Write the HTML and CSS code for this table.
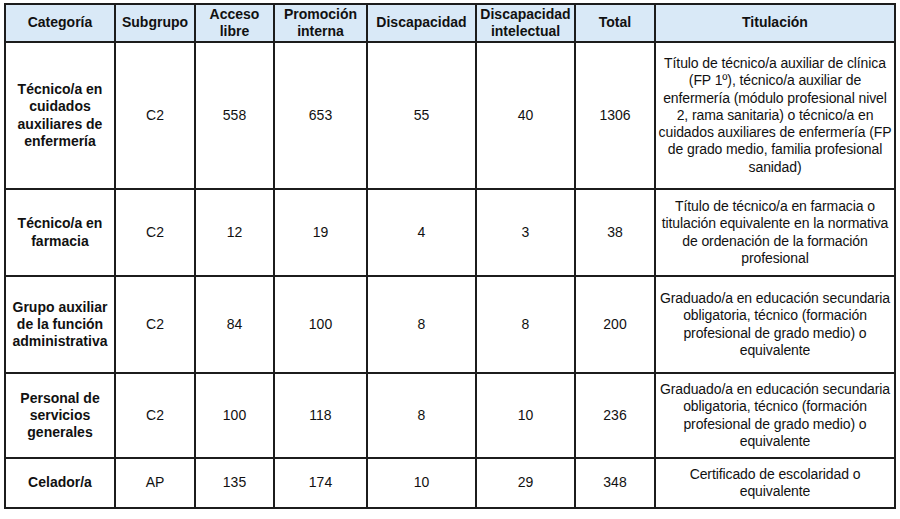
FILE: index.html
```html
<!DOCTYPE html>
<html lang="es">
<head>
<meta charset="utf-8">
<title>Plazas</title>
<link rel="stylesheet" href="styles.css">
</head>
<body>
<table class="plazas">
  <thead>
    <tr class="r-head">
      <th class="c1">Categoría</th>
      <th class="c2">Subgrupo</th>
      <th class="c3">Acceso<br>libre</th>
      <th class="c4">Promoción<br>interna</th>
      <th class="c5">Discapacidad</th>
      <th class="c6">Discapacidad<br>intelectual</th>
      <th class="c7">Total</th>
      <th class="c8">Titulación</th>
    </tr>
  </thead>
  <tbody>
    <tr class="r1">
      <td class="cat">Técnico/a en<br>cuidados<br>auxiliares de<br>enfermería</td>
      <td>C2</td>
      <td>558</td>
      <td>653</td>
      <td>55</td>
      <td>40</td>
      <td>1306</td>
      <td class="tit">Título de técnico/a auxiliar de clínica<br>(FP 1º), técnico/a auxiliar de<br>enfermería (módulo profesional nivel<br>2, rama sanitaria) o técnico/a en<br>cuidados auxiliares de enfermería (FP<br>de grado medio, familia profesional<br>sanidad)</td>
    </tr>
    <tr class="r2">
      <td class="cat">Técnico/a en<br>farmacia</td>
      <td>C2</td>
      <td>12</td>
      <td>19</td>
      <td>4</td>
      <td>3</td>
      <td>38</td>
      <td class="tit">Título de técnico/a en farmacia o<br>titulación equivalente en la normativa<br>de ordenación de la formación<br>profesional</td>
    </tr>
    <tr class="r3">
      <td class="cat">Grupo auxiliar<br>de la función<br>administrativa</td>
      <td>C2</td>
      <td>84</td>
      <td>100</td>
      <td>8</td>
      <td>8</td>
      <td>200</td>
      <td class="tit">Graduado/a en educación secundaria<br>obligatoria, técnico (formación<br>profesional de grado medio) o<br>equivalente</td>
    </tr>
    <tr class="r4">
      <td class="cat">Personal de<br>servicios<br>generales</td>
      <td>C2</td>
      <td>100</td>
      <td>118</td>
      <td>8</td>
      <td>10</td>
      <td>236</td>
      <td class="tit">Graduado/a en educación secundaria<br>obligatoria, técnico (formación<br>profesional de grado medio) o<br>equivalente</td>
    </tr>
    <tr class="r5">
      <td class="cat">Celador/a</td>
      <td>AP</td>
      <td>135</td>
      <td>174</td>
      <td>10</td>
      <td>29</td>
      <td>348</td>
      <td class="tit">Certificado de escolaridad o<br>equivalente</td>
    </tr>
  </tbody>
</table>
</body>
</html>
```
FILE: styles.css
```css
html, body {
  margin: 0;
  padding: 0;
  background: #ffffff;
}

body {
  padding: 3px 0 0 4px;
  font-family: "Liberation Sans", Arial, sans-serif;
  color: #111111;
}

.plazas {
  border-collapse: separate;
  border-spacing: 0;
  table-layout: fixed;
  width: 892px;
  border-left: 2px solid #1c1c1c;
  border-top: 2px solid #1c1c1c;
  font-size: 14px;
  line-height: 17.3px;
}

.plazas th,
.plazas td {
  box-sizing: border-box;
  border-right: 2px solid #1c1c1c;
  border-bottom: 2px solid #1c1c1c;
  padding: 0 1px;
  text-align: center;
  vertical-align: middle;
  white-space: nowrap;
}

.plazas th {
  background: #d9e9f7;
  font-weight: bold;
}

.c1 { width: 110px; }
.c2 { width: 80px; }
.c3 { width: 79px; }
.c4 { width: 93px; }
.c5 { width: 109px; }
.c6 { width: 99px; }
.c7 { width: 80px; }
.c8 { width: 240px; }

.cat {
  font-weight: bold;
}

.tit {
  letter-spacing: -0.1px;
}

.r-head th { height: 38px; }
.r1 td { height: 147px; }
.r2 td { height: 87px; }
.r3 td { height: 97px; }
.r4 td { height: 85px; }
.r5 td { height: 50px; }
```
